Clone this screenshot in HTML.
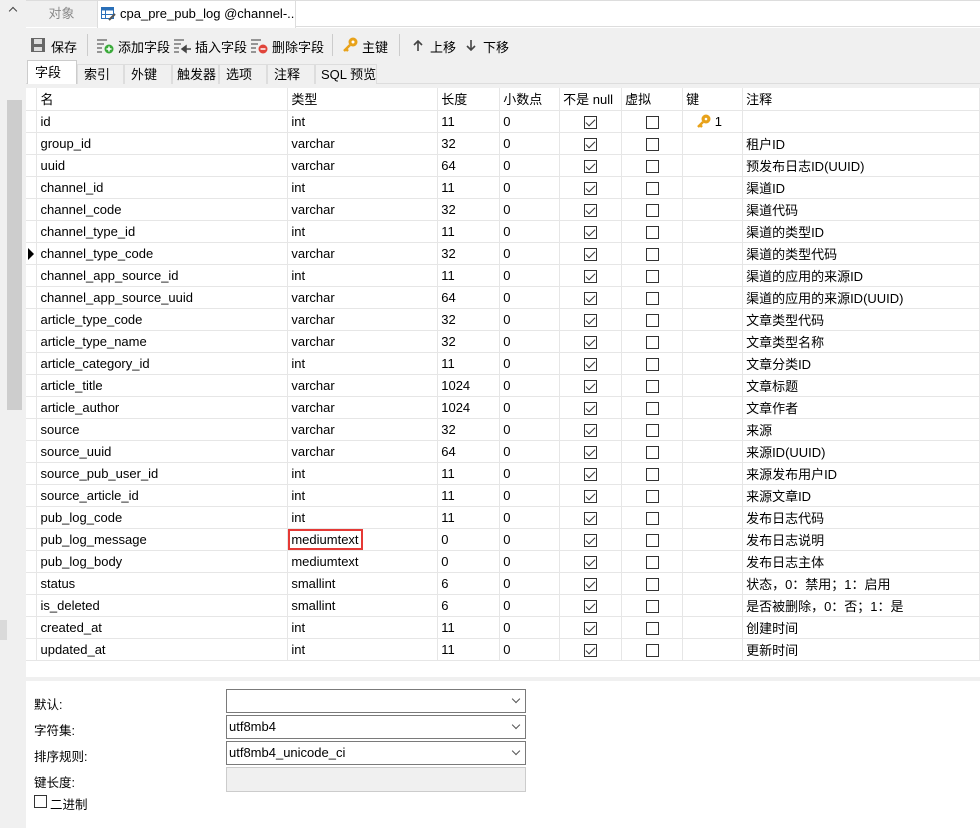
<!DOCTYPE html>
<html><head><meta charset="utf-8"><style>
*{margin:0;padding:0;box-sizing:border-box}
body{width:980px;height:828px;overflow:hidden;background:#fff;font:13px "Liberation Sans","Noto Sans CJK SC",sans-serif;color:#000;position:relative}
.abs{position:absolute;white-space:nowrap}
table{border-collapse:collapse;table-layout:fixed;position:absolute;left:26px;top:88px}
td{height:22px;border-right:1px solid #e6e6e6;border-bottom:1px solid #e6e6e6;padding-left:3px;white-space:nowrap;overflow:hidden;font-size:13px}
td.g{padding:0;position:relative}
.cb{display:inline-block;width:13px;height:13px;border:1px solid #333;vertical-align:middle;position:relative;background:#fff}
.cb.c::after{content:"";position:absolute;left:3px;top:0px;width:4px;height:8px;border:solid #333;border-width:0 1.3px 1.3px 0;transform:rotate(45deg)}
td.ck{text-align:center;padding:0}
.tab{position:absolute;top:64px;height:20px;border:1px solid #ddd;border-bottom:none;background:#f0f0f0;font-size:13px;padding-left:6px;line-height:19px;white-space:nowrap;overflow:hidden}
.tb{position:absolute;top:37px;font-size:13px;white-space:nowrap}
.lbl{position:absolute;left:34px;font-size:12.5px;white-space:nowrap}
.sel{position:absolute;left:226px;width:300px;height:24px;border:1px solid #7a7a7a;background:#fff;font-size:13px;padding-left:2px;line-height:22px}
.sel::after{content:"";position:absolute;right:6px;top:6px;width:5px;height:5px;border:solid #555;border-width:0 1px 1px 0;transform:rotate(45deg)}
</style></head><body>
<div class="abs" style="left:0;top:0;width:26px;height:828px;background:#f0f0f0"></div>
<div class="abs" style="left:7px;top:100px;width:15px;height:310px;background:#cdcdcd"></div>
<div class="abs" style="left:0;top:620px;width:7px;height:20px;background:#dadada"></div>
<div class="abs" style="left:10px;top:8px;width:6px;height:6px;border:solid #444;border-width:1.5px 0 0 1.5px;transform:rotate(45deg)"></div>
<div class="abs" style="left:26px;top:0;width:954px;height:27px;background:#fff;border-top:1px solid #ddd;border-bottom:1px solid #ddd"></div>
<div class="abs" style="left:26px;top:1px;width:71px;height:26px;background:#f0f0f0;color:#888;text-align:center;line-height:26px">对象</div>
<div class="abs" style="left:97px;top:1px;width:199px;height:27px;background:#fff;border-left:1px solid #ddd;border-right:1px solid #ddd;line-height:26px;padding-left:22px;overflow:hidden">cpa_pre_pub_log @channel-...</div>
<svg class="abs" style="left:101px;top:7px" width="15" height="14"><rect x="0.5" y="0.5" width="12" height="11" fill="#fff" stroke="#2a6fb8"/><rect x="0.5" y="0.5" width="12" height="3" fill="#2a6fb8"/><line x1="4.5" y1="3" x2="4.5" y2="12" stroke="#2a6fb8"/><line x1="0" y1="7.5" x2="12" y2="7.5" stroke="#2a6fb8"/><path d="M8 13 L14 7" stroke="#555" stroke-width="2"/></svg>
<div class="abs" style="left:26px;top:28px;width:954px;height:60px;background:#f0f0f0"></div>
<svg class="abs" style="left:31px;top:38px" width="14" height="14"><rect x="0" y="0" width="14" height="14" fill="#666"/><rect x="3" y="1" width="8" height="5" fill="#ddd"/><rect x="3" y="9" width="8" height="4" fill="#ddd"/></svg>
<div class="tb" style="left:51px">保存</div>
<div class="abs" style="left:87px;top:34px;width:1px;height:22px;background:#ccc"></div>
<svg class="abs" style="left:97px;top:38px" width="18" height="16"><g stroke="#777" stroke-width="1.5"><line x1="0" y1="2" x2="10" y2="2"/><line x1="0" y1="6" x2="7" y2="6"/><line x1="0" y1="10" x2="5" y2="10"/><line x1="0" y1="14" x2="5" y2="14"/></g><circle cx="12" cy="11" r="4.5" fill="#3aaa3a"/><path d="M9.5 11h5M12 8.5v5" stroke="#fff" stroke-width="1.5"/></svg>
<div class="tb" style="left:118px">添加字段</div>
<svg class="abs" style="left:174px;top:38px" width="18" height="16"><g stroke="#777" stroke-width="1.5"><line x1="0" y1="2" x2="10" y2="2"/><line x1="0" y1="6" x2="7" y2="6"/><line x1="0" y1="10" x2="5" y2="10"/><line x1="0" y1="14" x2="5" y2="14"/></g><path d="M8 11h9M8 11l4-3v6z" stroke="#444" fill="#444" stroke-width="1.5"/></svg>
<div class="tb" style="left:195px">插入字段</div>
<svg class="abs" style="left:251px;top:38px" width="18" height="16"><g stroke="#777" stroke-width="1.5"><line x1="0" y1="2" x2="10" y2="2"/><line x1="0" y1="6" x2="7" y2="6"/><line x1="0" y1="10" x2="5" y2="10"/><line x1="0" y1="14" x2="5" y2="14"/></g><circle cx="12" cy="11" r="4.5" fill="#e0443a"/><path d="M9.5 11h5" stroke="#fff" stroke-width="1.5"/></svg>
<div class="tb" style="left:272px">删除字段</div>
<div class="abs" style="left:332px;top:34px;width:1px;height:22px;background:#ccc"></div>
<svg class="abs" style="left:343px;top:37px" width="15" height="16"><circle cx="10" cy="5" r="4.5" fill="#e8a21a"/><circle cx="10" cy="5" r="1.5" fill="#fff"/><path d="M7 8L1 14M3 12l2 2" stroke="#e8a21a" stroke-width="2.5"/></svg>
<div class="tb" style="left:362px">主键</div>
<div class="abs" style="left:399px;top:34px;width:1px;height:22px;background:#ccc"></div>
<svg class="abs" style="left:413px;top:40px" width="10" height="11"><path d="M5 11V1M1 5l4-4 4 4" stroke="#444" stroke-width="1.6" fill="none"/></svg>
<div class="tb" style="left:430px">上移</div>
<svg class="abs" style="left:466px;top:40px" width="10" height="11"><path d="M5 0v10M1 6l4 4 4-4" stroke="#444" stroke-width="1.6" fill="none"/></svg>
<div class="tb" style="left:483px">下移</div>
<div class="abs" style="left:26px;top:83px;width:954px;height:1px;background:#ddd"></div>
<div class="tab" style="left:27px;width:50px;top:60px;height:24px;background:#fff;border-color:#ccc;padding-left:7px;line-height:23px">字段</div>
<div class="tab" style="left:77px;width:47px">索引</div>
<div class="tab" style="left:124px;width:48px">外键</div>
<div class="tab" style="left:172px;width:47px;padding-left:4px">触发器</div>
<div class="tab" style="left:219px;width:48px">选项</div>
<div class="tab" style="left:267px;width:48px">注释</div>
<div class="tab" style="left:315px;width:62px;padding-left:5px">SQL 预览</div>
<div class="abs" style="left:26px;top:84px;width:954px;height:4px;background:#f0f0f0"></div>
<table>
<colgroup><col style="width:11px"><col style="width:251px"><col style="width:150px"><col style="width:62px"><col style="width:60px"><col style="width:62px"><col style="width:61px"><col style="width:60px"><col style="width:237px"></colgroup>
<tr><td class="g"></td><td>名</td><td>类型</td><td>长度</td><td>小数点</td><td>不是 null</td><td>虚拟</td><td>键</td><td>注释</td></tr>
<tr><td class="g"></td><td>id</td><td>int</td><td>11</td><td>0</td><td class="ck"><span class="cb c"></span></td><td class="ck"><span class="cb"></span></td><td style="padding-left:14px"><svg width="14" height="14" style="vertical-align:-2px"><circle cx="9" cy="5" r="4.5" fill="#e8a21a"/><circle cx="9" cy="5" r="1.3" fill="#fff"/><path d="M6 8L1 13M3 11l2 2" stroke="#e8a21a" stroke-width="2.5"/></svg> 1</td><td></td></tr>
<tr><td class="g"></td><td>group_id</td><td>varchar</td><td>32</td><td>0</td><td class="ck"><span class="cb c"></span></td><td class="ck"><span class="cb"></span></td><td></td><td>租户ID</td></tr>
<tr><td class="g"></td><td>uuid</td><td>varchar</td><td>64</td><td>0</td><td class="ck"><span class="cb c"></span></td><td class="ck"><span class="cb"></span></td><td></td><td>预发布日志ID(UUID)</td></tr>
<tr><td class="g"></td><td>channel_id</td><td>int</td><td>11</td><td>0</td><td class="ck"><span class="cb c"></span></td><td class="ck"><span class="cb"></span></td><td></td><td>渠道ID</td></tr>
<tr><td class="g"></td><td>channel_code</td><td>varchar</td><td>32</td><td>0</td><td class="ck"><span class="cb c"></span></td><td class="ck"><span class="cb"></span></td><td></td><td>渠道代码</td></tr>
<tr><td class="g"></td><td>channel_type_id</td><td>int</td><td>11</td><td>0</td><td class="ck"><span class="cb c"></span></td><td class="ck"><span class="cb"></span></td><td></td><td>渠道的类型ID</td></tr>
<tr><td class="g"><span style="position:absolute;left:2px;top:5px;border-left:6px solid #000;border-top:6px solid transparent;border-bottom:6px solid transparent"></span></td><td>channel_type_code</td><td>varchar</td><td>32</td><td>0</td><td class="ck"><span class="cb c"></span></td><td class="ck"><span class="cb"></span></td><td></td><td>渠道的类型代码</td></tr>
<tr><td class="g"></td><td>channel_app_source_id</td><td>int</td><td>11</td><td>0</td><td class="ck"><span class="cb c"></span></td><td class="ck"><span class="cb"></span></td><td></td><td>渠道的应用的来源ID</td></tr>
<tr><td class="g"></td><td>channel_app_source_uuid</td><td>varchar</td><td>64</td><td>0</td><td class="ck"><span class="cb c"></span></td><td class="ck"><span class="cb"></span></td><td></td><td>渠道的应用的来源ID(UUID)</td></tr>
<tr><td class="g"></td><td>article_type_code</td><td>varchar</td><td>32</td><td>0</td><td class="ck"><span class="cb c"></span></td><td class="ck"><span class="cb"></span></td><td></td><td>文章类型代码</td></tr>
<tr><td class="g"></td><td>article_type_name</td><td>varchar</td><td>32</td><td>0</td><td class="ck"><span class="cb c"></span></td><td class="ck"><span class="cb"></span></td><td></td><td>文章类型名称</td></tr>
<tr><td class="g"></td><td>article_category_id</td><td>int</td><td>11</td><td>0</td><td class="ck"><span class="cb c"></span></td><td class="ck"><span class="cb"></span></td><td></td><td>文章分类ID</td></tr>
<tr><td class="g"></td><td>article_title</td><td>varchar</td><td>1024</td><td>0</td><td class="ck"><span class="cb c"></span></td><td class="ck"><span class="cb"></span></td><td></td><td>文章标题</td></tr>
<tr><td class="g"></td><td>article_author</td><td>varchar</td><td>1024</td><td>0</td><td class="ck"><span class="cb c"></span></td><td class="ck"><span class="cb"></span></td><td></td><td>文章作者</td></tr>
<tr><td class="g"></td><td>source</td><td>varchar</td><td>32</td><td>0</td><td class="ck"><span class="cb c"></span></td><td class="ck"><span class="cb"></span></td><td></td><td>来源</td></tr>
<tr><td class="g"></td><td>source_uuid</td><td>varchar</td><td>64</td><td>0</td><td class="ck"><span class="cb c"></span></td><td class="ck"><span class="cb"></span></td><td></td><td>来源ID(UUID)</td></tr>
<tr><td class="g"></td><td>source_pub_user_id</td><td>int</td><td>11</td><td>0</td><td class="ck"><span class="cb c"></span></td><td class="ck"><span class="cb"></span></td><td></td><td>来源发布用户ID</td></tr>
<tr><td class="g"></td><td>source_article_id</td><td>int</td><td>11</td><td>0</td><td class="ck"><span class="cb c"></span></td><td class="ck"><span class="cb"></span></td><td></td><td>来源文章ID</td></tr>
<tr><td class="g"></td><td>pub_log_code</td><td>int</td><td>11</td><td>0</td><td class="ck"><span class="cb c"></span></td><td class="ck"><span class="cb"></span></td><td></td><td>发布日志代码</td></tr>
<tr><td class="g"></td><td>pub_log_message</td><td style="padding-left:0"><span style="display:inline-block;border:2px solid #e53935;padding:1px 2px 1px 1px;margin-left:0">mediumtext</span></td><td>0</td><td>0</td><td class="ck"><span class="cb c"></span></td><td class="ck"><span class="cb"></span></td><td></td><td>发布日志说明</td></tr>
<tr><td class="g"></td><td>pub_log_body</td><td>mediumtext</td><td>0</td><td>0</td><td class="ck"><span class="cb c"></span></td><td class="ck"><span class="cb"></span></td><td></td><td>发布日志主体</td></tr>
<tr><td class="g"></td><td>status</td><td>smallint</td><td>6</td><td>0</td><td class="ck"><span class="cb c"></span></td><td class="ck"><span class="cb"></span></td><td></td><td>状态，0：禁用；1：启用</td></tr>
<tr><td class="g"></td><td>is_deleted</td><td>smallint</td><td>6</td><td>0</td><td class="ck"><span class="cb c"></span></td><td class="ck"><span class="cb"></span></td><td></td><td>是否被删除，0：否；1：是</td></tr>
<tr><td class="g"></td><td>created_at</td><td>int</td><td>11</td><td>0</td><td class="ck"><span class="cb c"></span></td><td class="ck"><span class="cb"></span></td><td></td><td>创建时间</td></tr>
<tr><td class="g"></td><td>updated_at</td><td>int</td><td>11</td><td>0</td><td class="ck"><span class="cb c"></span></td><td class="ck"><span class="cb"></span></td><td></td><td>更新时间</td></tr>
</table>
<div class="abs" style="left:26px;top:677px;width:954px;height:4px;background:#f0f0f0"></div>
<div class="lbl" style="top:694px">默认:</div>
<div class="sel" style="top:689px"></div>
<div class="lbl" style="top:720px">字符集:</div>
<div class="sel" style="top:715px">utf8mb4</div>
<div class="lbl" style="top:746px">排序规则:</div>
<div class="sel" style="top:741px">utf8mb4_unicode_ci</div>
<div class="lbl" style="top:772px">键长度:</div>
<div class="abs" style="left:226px;top:767px;width:300px;height:25px;border:1px solid #ccc;background:#f0f0f0"></div>
<div class="abs" style="left:34px;top:795px;width:13px;height:13px;border:1px solid #333"></div>
<div class="lbl" style="top:794px;left:50px">二进制</div>
</body></html>
